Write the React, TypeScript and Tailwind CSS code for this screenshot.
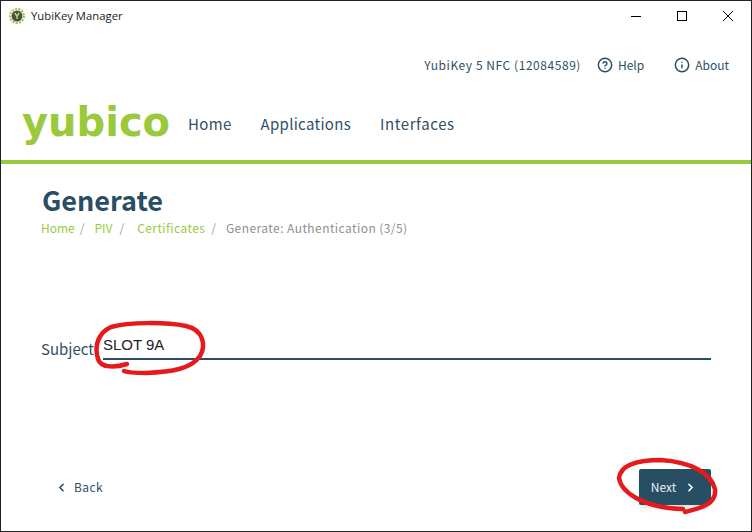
import React from 'react';
import { ChevronLeft, ChevronRight, HelpCircle, Info } from 'lucide-react';

const uiFont = { fontFamily: '"Noto Sans CJK JP", "Noto Sans", sans-serif' };

const TitleBar = () => (
    <div className="flex h-[30px] items-center justify-between">
        <div className="flex items-center">
            <svg width="16" height="16" viewBox="0 0 16 16" className="ml-[8px]">
                <circle cx="8" cy="8" r="7" fill="none" stroke="#9aca3c" strokeWidth="2" strokeDasharray="2.2 1.2" />
                <circle cx="8" cy="8" r="5.5" fill="#4a4f4a" />
                <path d="M5.8 5 L8 8.2 L10.2 5 M8 8.2 V11" stroke="#b5d96a" strokeWidth="1.5" fill="none" />
            </svg>
            <span className="ml-[6px] text-[11.3px] text-[#1a1a1a] font-['Open_Sans',sans-serif]">YubiKey Manager</span>
        </div>
        <div className="flex h-full">
            <div className="flex w-[46px] items-center justify-center">
                <div className="h-px w-[10px] bg-black" />
            </div>
            <div className="flex w-[46px] items-center justify-center">
                <div className="h-[10px] w-[10px] border border-black" />
            </div>
            <div className="flex w-[46px] items-center justify-center">
                <svg width="10" height="10" viewBox="0 0 10 10">
                    <path d="M0 0 L10 10 M10 0 L0 10" stroke="#000" strokeWidth="1" />
                </svg>
            </div>
        </div>
    </div>
);

const Header = () => (
    <div className="border-b-[4px] border-[#9aca3c]">
        <div className="flex h-[25px] mt-[21px] items-center justify-end pr-[22px] text-[12px] text-[#2f5068]">
            <span className="tracking-[0.55px]">YubiKey 5 NFC (12084589)</span>
            <span className="ml-[16px] flex items-center">
                <HelpCircle size={16} strokeWidth={2.2} className="text-[#284e64]" />
                <span className="ml-[5px]">Help</span>
            </span>
            <span className="ml-[30px] flex items-center">
                <Info size={16} strokeWidth={2.2} className="text-[#284e64]" />
                <span className="ml-[5px]">About</span>
            </span>
        </div>
        <div className="flex h-[83px] items-start pl-[21px]">
            <span className="mt-[15px] text-[40px] leading-[60px] font-bold text-[#9aca3c] font-['DejaVu_Sans',sans-serif]">yubico</span>
            <div className="ml-[18px] mt-[35px] flex gap-[29px] text-[15px] leading-[24px] tracking-[0.3px] text-[#2f5068]">
                <span>Home</span>
                <span>Applications</span>
                <span className="tracking-[0.6px]">Interfaces</span>
            </div>
        </div>
    </div>
);

const Breadcrumb = () => (
    <div className="flex text-[12px] leading-[18px]">
        <span className="text-[#9aca3c]">Home</span>
        <span className="ml-[5px] text-[#a0a0a0]">/</span>
        <span className="ml-[10px] text-[#9aca3c]">PIV</span>
        <span className="ml-[7px] text-[#a0a0a0]">/</span>
        <span className="ml-[13px] tracking-[0.4px] text-[#9aca3c]">Certificates</span>
        <span className="ml-[6px] text-[#a0a0a0]">/</span>
        <span className="ml-[10px] tracking-[0.43px] text-[#8d8f92]">Generate: Authentication (3/5)</span>
    </div>
);

// red pen marks drawn over the screenshot
const Annotations = () => (
    <svg className="pointer-events-none absolute inset-0" width="752" height="532" viewBox="0 0 752 532" fill="none">
        <path
            d="M126 363 C116 366 100 368 97 358 C93 345 97 332 110 326 C128 321 165 321 185 325 C203 329 205 345 199 355 C190 368 170 371 145 372 C135 372 128 372 123 370"
            stroke="#e41a1c"
            strokeWidth="4.5"
            strokeLinecap="round"
        />
        <path
            d="M684 511 C700 507 716 503 714 488 C710 472 690 461 660 459 C640 459 620 462 618 477 C620 490 640 507 682 508"
            stroke="#e41a1c"
            strokeWidth="4.5"
            strokeLinecap="round"
        />
    </svg>
);

export default function App() {
    return (
        <div className="relative h-[532px] w-[752px] overflow-hidden border border-[#222] bg-white" style={uiFont}>
            <TitleBar />
            <Header />
            <div className="flex h-[369px] flex-col pl-[41px] pr-[40px]">
                <h1 className="mt-[18px] text-[27px] leading-[36px] font-semibold text-[#284e64]">Generate</h1>
                <div className="mt-[1px] ml-[-1px]"><Breadcrumb /></div>
                <div className="mt-[94px] ml-[-1px] flex items-end">
                    <span className="text-[15px] leading-[22px] text-[#2f5068]">Subject</span>
                    <div className="ml-[9px] flex-1 border-b-2 border-[#284e64] font-['Liberation_Sans',sans-serif] text-[15px] leading-[27px] text-[#222]">SLOT 9A</div>
                </div>
                <div className="mt-auto mb-[28px] flex items-center justify-between">
                    <div className="ml-[13px] flex items-center text-[12px] tracking-[0.4px] text-[#2f5068]">
                        <ChevronLeft size={13} strokeWidth={3} className="text-[#284e64]" />
                        <span className="ml-[6px]">Back</span>
                    </div>
                    <div className="flex h-[36px] w-[72px] items-center justify-center rounded-[2px] bg-[#284e64] pr-[2px] text-[12px] text-[#e6eef2] shadow-md">
                        <span>Next</span>
                        <ChevronRight size={13} strokeWidth={3} className="ml-[8px] text-white" />
                    </div>
                </div>
            </div>
            <Annotations />
        </div>
    );
}
